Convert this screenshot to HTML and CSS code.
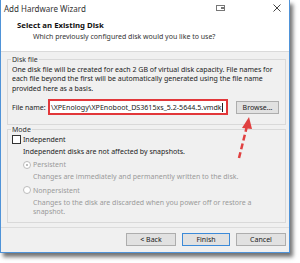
FILE: index.html
```html
<!DOCTYPE html>
<html>
<head>
<meta charset="utf-8">
<link rel="stylesheet" href="styles.css">
</head>
<body>
<div class="window">
  <div class="titlebar">
    <span class="title">Add Hardware Wizard</span>
    <span class="tb-icons">
      <svg class="ico-restore" width="9" height="6" viewBox="0 0 9 6"><rect x="0.5" y="0.5" width="8" height="5" fill="none" stroke="#777"/><rect x="5" y="2" width="3" height="2" fill="#777"/></svg>
      <svg class="ico-close" width="8" height="8" viewBox="0 0 8 8"><path d="M0.5 0.5L7.5 7.5M7.5 0.5L0.5 7.5" stroke="#444" stroke-width="1"/></svg>
    </span>
  </div>
  <div class="header">
    <div class="h-title">Select an Existing Disk</div>
    <div class="h-sub">Which previously configured disk would you like to use?</div>
  </div>
  <div class="content">
    <fieldset class="group disk">
      <legend>Disk file</legend>
      <p class="desc">One disk file will be created for each 2 GB of virtual disk capacity. File names for each file beyond the first will be automatically generated using the file name provided here as a basis.</p>
      <div class="file-row">
        <label>File name:</label>
        <div class="input"><span class="val">\XPEnology\XPEnoboot_DS3615xs_5.2-5644.5.vmdk</span><span class="caret"></span></div>
        <div class="btn browse">Browse...</div>
      </div>
    </fieldset>
    <fieldset class="group mode">
      <legend>Mode</legend>
      <div class="check-row"><span class="checkbox"></span>Independent</div>
      <div class="note">Independent disks are not affected by snapshots.</div>
      <div class="radio-row"><span class="radio on"></span>Persistent</div>
      <div class="sub-note">Changes are immediately and permanently written to the disk.</div>
      <div class="radio-row"><span class="radio"></span>Nonpersistent</div>
      <div class="sub-note">Changes to the disk are discarded when you power off or restore a snapshot.</div>
    </fieldset>
  </div>
  <div class="footer">
    <div class="btn">&lt; Back</div>
    <div class="btn default">Finish</div>
    <div class="btn cancel">Cancel</div>
  </div>
  <svg class="arrow" width="30" height="45" viewBox="0 0 30 45">
    <path d="M4 42 L12 10" stroke="#e04040" stroke-width="2.5" stroke-dasharray="6 3" fill="none"/>
    <path d="M14 1 L7 12 L17 13 Z" fill="#e04040"/>
  </svg>
</div>
</body>
</html>
```
FILE: styles.css
```css
* { box-sizing: border-box; }
html, body { margin: 0; padding: 0; background: #fff; }
body {
  font-family: "Noto Sans", "Open Sans", sans-serif;
  font-size: 7px;
  color: #222;
  width: 300px;
  height: 263px;
  overflow: hidden;
}
.window {
  position: relative;
  width: 290px;
  height: 253px;
  border: 1px solid #4f93d8;
  border-top: none;
  background: #f0f0f0;
  box-shadow: 3px 4px 4px rgba(0,0,0,0.55);
  display: flex;
  flex-direction: column;
}
.titlebar {
  height: 16px;
  background: #fff;
  display: flex;
  align-items: center;
  justify-content: space-between;
  padding: 0 8px 0 3px;
}
.title { font-size: 8px; color: #333; }
.tb-icons { display: flex; align-items: center; gap: 48px; }
.ico-restore { display: block; }
.ico-close { display: block; }
.header {
  height: 36px;
  background: #fff;
  border-bottom: 1px solid #dadada;
  padding: 3px 0 0 16px;
}
.h-title { font-weight: bold; font-size: 7.8px; color: #111; line-height: 12px; }
.h-sub { padding-left: 16px; line-height: 11px; color: #333; }
.content {
  flex: 1;
  padding: 3px 3px 0 6px;
  display: flex;
  flex-direction: column;
}
.group {
  margin: 0;
  border: 1px solid #d9d9d9;
  padding: 0 4px 0 4px;
}
.group legend {
  padding: 0 1px;
  margin-left: -1px;
  color: #333;
  line-height: 9px;
}
.disk { height: 70px; }
.desc { margin: 1px 0 0 0; line-height: 9.4px; color: #222; }
.file-row {
  display: flex;
  align-items: center;
  margin-top: 6px;
}
.file-row label { width: 36px; color: #222; }
.input {
  width: 180px;
  height: 16px;
  border: 2px solid #e2373a;
  background: #fff;
  display: flex;
  align-items: center;
  padding-left: 1px;
  white-space: nowrap;
  overflow: hidden;
  font-size: 7.1px;
  color: #222;
}
.val { flex: none; }
.caret { flex: none; width: 1px; height: 9px; background: #222; margin-left: 0.5px; }
.btn {
  height: 13px;
  border: 1px solid #adadad;
  background: #e1e1e1;
  text-align: center;
  line-height: 11px;
  color: #222;
}
.browse { width: 43px; margin-left: 8px; }
.mode { height: 98px; }
.check-row, .radio-row { display: flex; align-items: center; line-height: 9px; }
.check-row { margin-top: 1px; }
.checkbox {
  width: 9px; height: 9px;
  border: 1px solid #333;
  background: #fff;
  margin-right: 2px;
}
.note { padding-left: 11px; line-height: 9px; margin-top: 3px; }
.radio-row { padding-left: 11px; color: #9a9a9a; margin-top: 4px; }
.radio {
  width: 8px; height: 8px;
  border: 1px solid #bcbcbc;
  border-radius: 50%;
  background: #fff;
  margin-right: 2px;
  position: relative;
}
.radio.on::after {
  content: "";
  position: absolute;
  left: 2px; top: 2px;
  width: 2px; height: 2px;
  border-radius: 50%;
  background: #aaa;
}
.sub-note { padding-left: 21px; color: #9a9a9a; line-height: 9.5px; margin-top: 3px; }
.footer {
  height: 25px;
  border-top: 1px solid #dcdcdc;
  display: flex;
  justify-content: flex-end;
  align-items: flex-start;
  padding: 5px 3px 0 0;
  gap: 6px;
}
.footer .btn { width: 50px; }
.footer .default { border-color: #3c8ad8; width: 48px; }
.arrow { position: absolute; left: 234px; top: 116px; }
```
